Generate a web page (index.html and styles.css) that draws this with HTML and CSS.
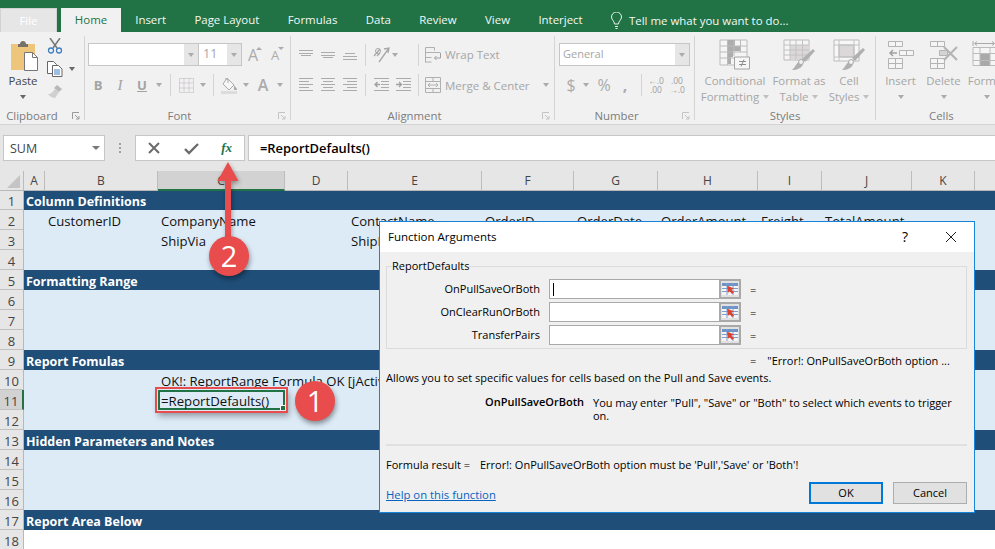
FILE: index.html
```html
<!DOCTYPE html>
<html lang="en">
<head>
<meta charset="utf-8">
<title>Function Arguments</title>
<link rel="stylesheet" href="styles.css">
</head>
<body>
<svg class="defs" width="0" height="0" aria-hidden="true">
  <symbol id="launch" viewBox="0 0 8 8"><path d="M.5 7V.5H7M3 3l4 4M7 4v3H4" fill="none" stroke="#9a9a9a"/></symbol>
  <symbol id="launchd" viewBox="0 0 8 8"><path d="M.5 7V.5H7M3 3l4 4M7 4v3H4" fill="none" stroke="#c4c4c4"/></symbol>
  <symbol id="altop" viewBox="0 0 16 16"><path d="M1 3.500h14M1 6.500h14M3 8.500h10" stroke="#ababab" fill="none"/></symbol>
  <symbol id="almid" viewBox="0 0 16 16"><path d="M1 5.500h14M1 8.500h14M3 10.500h10" stroke="#ababab" fill="none"/></symbol>
  <symbol id="albot" viewBox="0 0 16 16"><path d="M3 6.500h10M1 9.500h14M1 12.500h14" stroke="#ababab" fill="none"/></symbol>
  <symbol id="alleft" viewBox="0 0 16 16"><path d="M1 1.500h14M1 4.500h10M1 7.500h14M1 10.500h10M1 13.500h14" stroke="#ababab" fill="none"/></symbol>
  <symbol id="alcen" viewBox="0 0 16 16"><path d="M1 1.500h14M3 4.500h10M1 7.500h14M3 10.500h10M1 13.500h14" stroke="#ababab" fill="none"/></symbol>
  <symbol id="alright" viewBox="0 0 16 16"><path d="M1 1.500h14M5 4.500h10M1 7.500h14M5 10.500h10M1 13.500h14" stroke="#ababab" fill="none"/></symbol>
  <symbol id="indl" viewBox="0 0 17 16"><path d="M1 1.500h15M8 4.500h8M8 7.500h8M8 10.500h8M1 13.500h15" stroke="#ababab" fill="none"/><path d="M7 7.500H2M4.500 5L2 7.500 4.500 10" stroke="#a0a0a0" fill="none" stroke-width="1.300"/></symbol>
  <symbol id="indr" viewBox="0 0 17 16"><path d="M1 1.500h15M8 4.500h8M8 7.500h8M8 10.500h8M1 13.500h15" stroke="#ababab" fill="none"/><path d="M1 7.500h5M4 5l2.500 2.500L4 10" stroke="#a0a0a0" fill="none" stroke-width="1.300"/></symbol>
  <symbol id="merge" viewBox="0 0 16 16"><path d="M.5.5h15v15H.5zM.5 4.500h15M.5 11.500h15M8 .5v4M8 11.500v4M3 8h10M5 6l-2 2 2 2M11 6l2 2-2 2" fill="none" stroke="#b0b0b0"/></symbol>
  <symbol id="wrap" viewBox="0 0 16 16"><path d="M.5.5h9M.5 5.500h15M.5 10.500h6M.5 15h6M.5.5v15M9.500.5v3" fill="none" stroke="#b0b0b0"/><path d="M15.500 6v5h-6M11.500 9l-2 2 2 2" fill="none" stroke="#a0a0a0"/></symbol>
  <symbol id="orient" viewBox="0 0 18 18"><path d="M2 10l6-7M5 10l3-3M12 3l5-1-1 5M7 16L17 2" fill="none" stroke="#a8a8a8" stroke-width="1.300"/><circle cx="6" cy="5" r="2.500" fill="none" stroke="#a8a8a8"/></symbol>
  <symbol id="border" viewBox="0 0 15 15"><path d="M.5.5h14v14H.5zM5 .5v14M10 .5v14M.5 5h14M.5 10h14" fill="none" stroke="#b8b2bb" stroke-dasharray="1 1"/></symbol>
  <symbol id="fill" viewBox="0 0 17 17"><path d="M6 1l7 7-5 5-6-6z" fill="#f7f7f7" stroke="#aaa"/><path d="M4 2h3v4" stroke="#aaa" fill="none"/><path d="M13 8l3 4v1h-3z" fill="#ababab"/><rect y="14" width="16" height="3" fill="#dcdcdc"/></symbol>
  <symbol id="cf" viewBox="0 0 32 32"><path d="M1 1h27v25H1z" fill="#f5f5f5" stroke="#bbb"/><path d="M9 1h7v6H9zM9 7h12v5H9zM9 12h5v6H9zM9 18h3v7H9z" fill="#adadad"/><path d="M1 7h27M1 13h27M1 19h27M8.500 1v25M15 1v16M21.500 1v12" stroke="#bbb" fill="none"/><path d="M15.500 18h15v12h-15z" fill="#f7f7f7" stroke="#a5a5a5"/><path d="M20 22.500h7M20 25.500h7M25 20.500l-3 7" stroke="#8f8f8f" fill="none"/></symbol>
  <symbol id="ft" viewBox="0 0 32 32"><path d="M1 1h25v20H1z" fill="#f5f5f5" stroke="#bbb"/><path d="M7 6h19v15H7z" fill="#dcd8da"/><path d="M1 6h25M1 11h25M1 16h25M7 1v20M13 1v20M19.500 1v20" stroke="#c2c2c2" fill="none"/><path d="M30 10l2 2-10 11-3-3z" fill="#b0b0b0"/><path d="M17 22l3 3c-1 4-6 6-11 6 3-2 4-7 8-9z" fill="#b0b0b0"/><circle cx="18" cy="23" r="2.500" fill="#f1f1f1" stroke="#aaa"/></symbol>
  <symbol id="cs" viewBox="0 0 32 32"><path d="M1 1h25v21H1z" fill="#f7f7f7" stroke="#bbb"/><path d="M6 6h15v12H6z" fill="#dcd8da" stroke="#bbb"/><path d="M1 6h25M1 18h25M6 1v21M21 1v21" stroke="#c2c2c2" fill="none"/><path d="M30 9l2 2-10 11-3-3z" fill="#b0b0b0"/><path d="M17 22l3 3c-1 4-6 6-11 6 3-2 4-7 8-9z" fill="#b0b0b0"/><circle cx="18" cy="23" r="2.500" fill="#f1f1f1" stroke="#aaa"/></symbol>
  <symbol id="ins" viewBox="0 0 28 30"><path d="M1.500 1.500h14v5h-14zM8.500 1.500v5M1.500 18.500h14v10h-14zM1.500 23.500h14M8.500 18.500v10M12.500 10.500h14v5h-14zM19.500 10.500v5" fill="#f5f5f5" stroke="#b4b4b4"/><path d="M10 13H3M6 10l-3 3 3 3" fill="none" stroke="#a0a0a0" stroke-width="1.500"/></symbol>
  <symbol id="del" viewBox="0 0 30 30"><path d="M1.500 1.500h14v5h-14zM8.500 1.500v5M1.500 18.500h14v10h-14zM1.500 23.500h14M8.500 18.500v10" fill="#f5f5f5" stroke="#b4b4b4"/><path d="M10.500 10.500h8v5h-8z" fill="#d4d4d4" stroke="#b4b4b4"/><path d="M15 7l13 13M28 7L15 20" stroke="#b4b4b4" stroke-width="2.200" fill="none"/></symbol>
  <symbol id="fmt" viewBox="0 0 30 30"><path d="M1 1v5M24 1v5M3 3.500h19M5 1.500L2.500 3.500 5 5.500M20 1.500l2.500 2L20 5.500" fill="none" stroke="#aaa"/><path d="M1 7.500h24v18H1z" fill="#f5f5f5" stroke="#bbb"/><path d="M8 14h10v12H8z" fill="#a9a9a9"/><path d="M1 13.500h24M1 20.500h24M8 7.500v18M18 7.500v18" stroke="#bbb" fill="none"/></symbol>
  <symbol id="refb" viewBox="0 0 18 14"><path d="M1 1h16v12H1z" fill="#f4f4f4"/><path d="M1 1h16v3H1z" fill="#6d93c9"/><path d="M1 6.500h16M1 9.500h16M6 1v12M12 1v12" stroke="#7d9fcf" fill="none"/><path d="M6 3.500l7 3-2.500 1 2.500 3-2 1.500-2.500-3-1.500 2z" fill="#d9432f"/></symbol>
</svg>

<nav class="tabs">
  <span class="tab tab-file">File</span>
  <span class="tab tab-active">Home</span>
  <span class="tab">Insert</span>
  <span class="tab">Page Layout</span>
  <span class="tab">Formulas</span>
  <span class="tab">Data</span>
  <span class="tab">Review</span>
  <span class="tab">View</span>
  <span class="tab">Interject</span>
  <span class="tab tell">
    <svg width="11" height="17" viewBox="0 0 11 17"><path d="M3.500 12c0-3-3-4-3-7a5 5 0 0 1 10 0c0 3-3 4-3 7zM4 14.500h3M4.500 16.500h2" fill="none" stroke="#e8f1ec"/></svg>
    Tell me what you want to do...
  </span>
</nav>

<section class="ribbon">
  <div class="group g-clip">
    <div class="body clip-body">
      <div class="paste">
        <svg width="30" height="31" viewBox="0 0 30 31"><path d="M1 4h24v26H1z" fill="#edc67c"/><path d="M8 4h2c0-4 6-4 6 0h2v3H8z" fill="#77706a"/><path d="M14.500 12.500h8l5 5v13h-13z" fill="#fff" stroke="#777"/><path d="M22.500 12.500v5h5" fill="none" stroke="#777"/></svg>
        <span class="big-text">Paste</span>
        <i class="caret dark"></i>
      </div>
      <div class="clip-small">
        <div class="clip-item">
          <svg width="16" height="16" viewBox="0 0 16 16"><path d="M3 0l7 10M13 0L6 10" stroke="#777" stroke-width="1.500" fill="none"/><circle cx="4" cy="12.500" r="2.500" fill="none" stroke="#3f7fc1" stroke-width="1.300"/><circle cx="12" cy="12.500" r="2.500" fill="none" stroke="#3f7fc1" stroke-width="1.300"/></svg>
        </div>
        <div class="clip-item">
          <svg width="16" height="16" viewBox="0 0 16 16"><path d="M.5.5h6l3 3v9h-9z" fill="#fff" stroke="#666"/><path d="M5.500 4.500h6l3.500 3.500v7.500H5.500z" fill="#fff" stroke="#666"/><path d="M7 9h6M7 11h6M7 13h6" stroke="#3f7fc1"/></svg>
          <i class="caret dark"></i>
        </div>
        <div class="clip-item">
          <svg width="17" height="15" viewBox="0 0 17 15"><path d="M10 1l5 4-3 3-5-4z" fill="#b8b8b8"/><path d="M8 5l4 3-4 6c-2 0-6-2-7-4 3 0 5-2 7-5z" fill="#d0d0d0"/></svg>
        </div>
      </div>
    </div>
    <div class="glabel">Clipboard<svg class="launcher" width="8" height="8"><use href="#launch"/></svg></div>
  </div>

  <div class="group g-font">
    <div class="body">
      <div class="row">
        <div class="combo name"><span class="field"></span><span class="drop"><i class="caret"></i></span></div>
        <div class="combo size"><span class="field">11</span><span class="drop"><i class="caret"></i></span></div>
        <span class="tool w22 ga">A<i class="sup up"></i></span>
        <span class="tool w22 ga small">A<i class="sup"></i></span>
      </div>
      <div class="row r-font">
        <span class="tool w22 tb">B</span>
        <span class="tool w22 tb it">I</span>
        <span class="tool w22 tb un">U</span>
        <span class="tool w12"><i class="caret"></i></span>
        <i class="sep s5"></i>
        <span class="tool w22"><svg width="15" height="15"><use href="#border"/></svg></span>
        <span class="tool w12"><i class="caret"></i></span>
        <i class="sep s4"></i>
        <span class="tool w22"><svg width="17" height="17"><use href="#fill"/></svg></span>
        <span class="tool w12"><i class="caret"></i></span>
        <span class="tool w22 big-a">A</span>
        <span class="tool w12"><i class="caret"></i></span>
      </div>
    </div>
    <div class="glabel">Font<svg class="launcher" width="8" height="8"><use href="#launchd"/></svg></div>
  </div>

  <div class="group g-align">
    <div class="body">
      <div class="row">
        <span class="tool w22"><svg width="16" height="16"><use href="#altop"/></svg></span>
        <span class="tool w22"><svg width="16" height="16"><use href="#almid"/></svg></span>
        <span class="tool w22"><svg width="16" height="16"><use href="#albot"/></svg></span>
        <i class="sep s4"></i>
        <span class="tool w22"><svg width="18" height="18"><use href="#orient"/></svg></span>
        <span class="tool w22 start"><i class="caret"></i></span>
        <i class="sep s4"></i>
        <span class="texttool"><svg width="16" height="16"><use href="#wrap"/></svg>Wrap Text</span>
      </div>
      <div class="row">
        <span class="tool w22"><svg width="16" height="16"><use href="#alleft"/></svg></span>
        <span class="tool w22"><svg width="16" height="16"><use href="#alcen"/></svg></span>
        <span class="tool w22"><svg width="16" height="16"><use href="#alright"/></svg></span>
        <i class="sep s4"></i>
        <span class="tool w22"><svg width="17" height="16"><use href="#indl"/></svg></span>
        <span class="tool w22"><svg width="17" height="16"><use href="#indr"/></svg></span>
        <i class="sep s4"></i>
        <span class="texttool"><svg width="16" height="16"><use href="#merge"/></svg>Merge &amp; Center<i class="caret merge-caret"></i></span>
      </div>
    </div>
    <div class="glabel">Alignment<svg class="launcher" width="8" height="8"><use href="#launchd"/></svg></div>
  </div>

  <div class="group g-num">
    <div class="body">
      <div class="row">
        <div class="combo general"><span class="field">General</span><span class="drop"><i class="caret"></i></span></div>
      </div>
      <div class="row">
        <span class="tool w24 numsym">$</span>
        <span class="tool w6"><i class="caret"></i></span>
        <span class="tool w30 numsym">%</span>
        <span class="tool w12 numsym comma">,</span>
        <i class="sep s10"></i>
        <span class="tool w20 dec"><small>←.0</small><small>.00</small></span>
        <span class="tool w22 dec"><small>.00</small><small>→.0</small></span>
      </div>
    </div>
    <div class="glabel">Number<svg class="launcher" width="8" height="8"><use href="#launchd"/></svg></div>
  </div>

  <div class="group g-styles">
    <div class="body bigrow">
      <div class="bigbtn w72"><svg width="32" height="32"><use href="#cf"/></svg><span>Conditional</span><span>Formatting<i class="caret tiny"></i></span></div>
      <div class="bigbtn w56"><svg width="32" height="32"><use href="#ft"/></svg><span>Format as</span><span>Table<i class="caret tiny"></i></span></div>
      <div class="bigbtn w44"><svg width="32" height="32"><use href="#cs"/></svg><span>Cell</span><span>Styles<i class="caret tiny"></i></span></div>
    </div>
    <div class="glabel">Styles</div>
  </div>

  <div class="group g-cells">
    <div class="body bigrow">
      <div class="bigbtn w43"><svg width="28" height="30"><use href="#ins"/></svg><span>Insert</span><span><i class="caret"></i></span></div>
      <div class="bigbtn w43"><svg width="30" height="30"><use href="#del"/></svg><span>Delete</span><span><i class="caret"></i></span></div>
      <div class="bigbtn w44"><svg width="30" height="30"><use href="#fmt"/></svg><span>Format</span><span><i class="caret"></i></span></div>
    </div>
    <div class="glabel">Cells</div>
  </div>
</section>

<section class="formula">
  <div class="namebox"><span>SUM</span><i class="caret mid"></i></div>
  <div class="dots"><i></i><i></i><i></i></div>
  <div class="fxbox">
    <svg width="14" height="14" viewBox="0 0 14 14"><path d="M2 2l10 10M12 2L2 12" stroke="#6b6b6b" stroke-width="2" fill="none"/></svg>
    <svg width="15" height="13" viewBox="0 0 15 13"><path d="M1 7l4 4 9-9" stroke="#6b6b6b" stroke-width="2.400" fill="none"/></svg>
    <span class="fx">fx</span>
  </div>
  <div class="finput">=ReportDefaults()</div>
</section>

<main class="sheet">
  <div class="row-g head">
    <span class="corner"><svg width="13" height="13" viewBox="0 0 13 13"><path d="M13 0v13H0z" fill="#c4c4c4"/></svg></span>
    <span>A</span><span>B</span><span class="sel-col">C</span><span>D</span><span>E</span><span>F</span><span>G</span><span>H</span><span>I</span><span>J</span><span>K</span><span></span>
  </div>
  <div class="row-g band"><b>1</b><span class="b-title">Column Definitions</span></div>
  <div class="row-g data"><b>2</b><span></span><span>CustomerID</span><span>CompanyName</span><span></span><span>ContactName</span><span>OrderID</span><span>OrderDate</span><span>OrderAmount</span><span>Freight</span><span>TotalAmount</span><span></span><span></span></div>
  <div class="row-g data"><b>3</b><span></span><span></span><span>ShipVia</span><span></span><span>ShipName</span></div>
  <div class="row-g data"><b>4</b></div>
  <div class="row-g band"><b>5</b><span class="b-title">Formatting Range</span></div>
  <div class="row-g data"><b>6</b></div>
  <div class="row-g data"><b>7</b></div>
  <div class="row-g data"><b>8</b></div>
  <div class="row-g band"><b>9</b><span class="b-title">Report Fomulas</span></div>
  <div class="row-g data"><b>10</b><span></span><span></span><span>OK!: ReportRange Formula OK [jActive]</span></div>
  <div class="row-g data"><b class="sel-row">11</b><span></span><span></span><span class="sel-cell">=ReportDefaults()</span></div>
  <div class="row-g data"><b>12</b></div>
  <div class="row-g band"><b>13</b><span class="b-title">Hidden Parameters and Notes</span></div>
  <div class="row-g data"><b>14</b></div>
  <div class="row-g data"><b>15</b></div>
  <div class="row-g data"><b>16</b></div>
  <div class="row-g band"><b>17</b><span class="b-title">Report Area Below</span></div>
  <div class="row-g blank"><b>18</b></div>
</main>

<svg class="arrow" width="40" height="96" viewBox="0 0 40 96" aria-hidden="true">
  <path d="M17 20h6v74h-6z" fill="#e84c4c"/>
  <path d="M20 1l10.500 19h-21z" fill="#e84c4c"/>
</svg>
<div class="badge badge-2">2</div>
<div class="badge badge-1">1</div>

<aside class="dialog">
  <header class="dtitle">
    <span>Function Arguments</span>
    <span class="help">?</span>
    <svg width="12" height="12" viewBox="0 0 12 12"><path d="M1 1l10 10M11 1L1 11" stroke="#222" fill="none"/></svg>
  </header>
  <div class="dbody">
    <fieldset class="args">
      <legend>ReportDefaults</legend>
      <div class="arg"><label>OnPullSaveOrBoth</label><div class="ainput"><span class="field caretbar"></span><span class="refbtn"><svg width="18" height="14"><use href="#refb"/></svg></span></div><span>=</span></div>
      <div class="arg"><label>OnClearRunOrBoth</label><div class="ainput"><span class="field"></span><span class="refbtn"><svg width="18" height="14"><use href="#refb"/></svg></span></div><span>=</span></div>
      <div class="arg"><label>TransferPairs</label><div class="ainput"><span class="field"></span><span class="refbtn"><svg width="18" height="14"><use href="#refb"/></svg></span></div><span>=</span></div>
    </fieldset>
    <div class="preview"><span>=</span><span>"Error!: OnPullSaveOrBoth option ...</span></div>
    <p class="desc">Allows you to set specific values for cells based on the Pull and Save events.</p>
    <div class="argdesc"><strong>OnPullSaveOrBoth</strong><p>You may enter "Pull", "Save" or "Both" to select which events to trigger on.</p></div>
    <hr class="rule">
    <div class="result"><span>Formula result =</span><span>Error!: OnPullSaveOrBoth option must be 'Pull','Save' or 'Both'!</span></div>
    <footer class="dfoot">
      <a class="link" href="#">Help on this function</a>
      <span class="btn btn-ok">OK</span>
      <span class="btn">Cancel</span>
    </footer>
  </div>
</aside>
</body>
</html>
```
FILE: styles.css
```css
* { box-sizing: border-box; }
html, body { margin: 0; height: 100%; }
body {
  width: 995px; height: 549px; overflow: hidden; position: relative;
  font-family: "Open Sans", "Noto Sans", sans-serif; font-size: 11.4px; color: #000;
  background: #fff;
}
.defs { position: absolute; }
svg { display: block; flex: none; }

/* tabs */
.tabs { height: 32px; background: #217346; display: flex; align-items: flex-end; color: #f4f8f6; font-size: 11.45px; }
.tab { height: 24px; line-height: 23px; padding: 0 14.2px; white-space: nowrap; }
.tab-file { width: 57px; padding: 0; text-align: center; background: #e6e6e6; color: #fff; border: 1px solid #d2d2d2; border-bottom: 0; margin-right: 4px; }
.tab-active { width: 60px; padding: 0; text-align: center; background: #f1f1f1; color: #217346; }
.tell { display: flex; align-items: center; gap: 7px; }

/* ribbon */
.ribbon { height: 93px; background: #f1f1f1; border-bottom: 1px solid #d4d4d4; padding-top: 4px; display: flex; overflow: hidden; }
.group { height: 84px; border-right: 1px solid #d4d4d4; display: flex; flex-direction: column; flex: none; }
.g-clip { width: 85px; }
.g-font { width: 206px; }
.g-align { width: 264px; }
.g-num { width: 140px; }
.g-styles { width: 181px; }
.g-cells { width: 120px; border-right: 0; }
.body { flex: 1; padding-top: 7px; display: flex; flex-direction: column; gap: 8px; min-height: 0; }
.glabel { position: relative; height: 16px; line-height: 16px; margin-bottom: -4px; padding-right: 16px; text-align: center; color: #7c7c7c; font-size: 11.4px; }
.g-clip .glabel { padding-right: 20px; }
.g-styles .glabel { padding-right: 0; }
.launcher { position: absolute; right: 4px; top: 4px; }
.g-cells .glabel { text-align: left; padding-left: 53px; }
.row { display: flex; align-items: center; height: 23px; }
.row + .row { height: 22px; }
.tool { display: flex; align-items: center; justify-content: center; height: 22px; flex: none; color: #ababab; }
.start { justify-content: flex-start; }
.w6 { width: 6px; } .w12 { width: 12px; } .w20 { width: 20px; } .w22 { width: 22px; } .w24 { width: 24px; } .w30 { width: 30px; }
.caret { display: inline-block; width: 0; height: 0; border: 3.5px solid transparent; border-top: 4px solid #ababab; border-bottom: 0; flex: none; }
.caret.dark { border-top-color: #666; }
.caret.tiny { margin-left: 4px; vertical-align: middle; border-top-color: #c0c0c0; }
.sep { display: block; width: 1px; height: 22px; background: #d4d4d4; flex: none; }
.s4 { margin: 0 4px; } .s5 { margin: 0 4px 0 5px; } .s10 { margin: 0 4px 0 10px; }

/* clipboard */
.clip-body { flex-direction: row; padding: 4px 0 0 4px; gap: 0; }
.paste { width: 38px; display: flex; flex-direction: column; align-items: center; }
.paste svg { margin-left: 3px; }
.big-text { line-height: 16px; margin-top: 2px; color: #444; }
.paste .caret { margin-top: 6px; }
.clip-small { margin-top: -6px; }
.clip-item { height: 23px; display: flex; align-items: center; gap: 6px; padding-left: 5px; }

/* font */
.g-font .row:first-child { padding-left: 3px; }
.combo { display: flex; height: 23px; border: 1px solid #c6c6c6; flex: none; }
.combo .field { flex: 1; background: #fff; color: #a6a6a6; padding-left: 3px; line-height: 20px; }
.combo .drop { width: 14px; background: #e6e6e6; display: flex; align-items: center; justify-content: center; }
.combo.name { width: 111px; }
.combo.size { width: 43px; border-left: 0; }
.combo.size .field { padding-left: 4px; font-size: 12.5px; }
.ga { font-size: 16px; align-items: center; position: relative; }
.ga.small { font-size: 13px; }
.sup { position: absolute; right: 2px; top: 3px; border: 3px solid transparent; border-bottom: 3px solid #ababab; border-top: 0; width: 0; height: 0; }
.sup:not(.up) { border-bottom: 0; border-top: 3px solid #ababab; }
.r-font { padding-left: 2px; }
.tb { font: bold 13px "Open Sans", sans-serif; color: #a3a3a3; }
.it { font-family: "Liberation Serif", serif; font-style: italic; font-weight: 400; font-size: 15px; }
.un { text-decoration: underline; }
.big-a { font-size: 16px; font-weight: 600; }

/* alignment */
.g-align .row { padding-left: 4px; }
.texttool { display: flex; align-items: center; gap: 4px; padding-left: 2px; color: #a6a6a6; font-size: 11.5px; white-space: nowrap; }
.merge-caret { margin-left: 9px; }

/* number */
.g-num .row { padding-left: 4px; }
.combo.general { width: 131px; }
.combo.general .field { font-size: 11px; }
.numsym { font-size: 16px; }
.comma { font-weight: 700; align-items: flex-start; }
.dec { flex-direction: column; }
.dec small { font-size: 8.5px; line-height: 9px; color: #a0a0a0; }

/* styles, cells */
.bigrow { flex-direction: row; gap: 0; padding-top: 3px; }
.g-styles .bigrow { padding-left: 4px; }
.g-cells .bigrow { padding-left: 3px; }
.bigbtn { display: flex; flex-direction: column; align-items: center; color: #a6a6a6; flex: none; white-space: nowrap; }
.bigbtn svg { margin-bottom: 2px; height: 32px; }
.bigbtn span { line-height: 16px; height: 16px; display: flex; align-items: center; }
.w72 { width: 72px; } .w56 { width: 56px; } .w44 { width: 44px; } .w43 { width: 43px; }

/* formula bar */
.formula { height: 46px; background: #e6e6e6; padding: 10px 0 10px 3px; display: flex; }
.namebox { width: 102px; background: #fff; border: 1px solid #c6c6c6; display: flex; align-items: center; justify-content: space-between; padding: 0 4px 0 6px; color: #444; font-size: 12.5px; }
.caret.mid { border-top-color: #777; border-width: 4px 4px 0; }
.dots { width: 30px; display: flex; flex-direction: column; align-items: center; justify-content: center; gap: 2px; }
.dots i { display: block; width: 2px; height: 2px; background: #a0a0a0; }
.fxbox { width: 110px; margin-right: 3px; background: #fff; border: 1px solid #c6c6c6; display: flex; align-items: center; justify-content: space-between; padding: 0 12px 0 11px; }
.fx { font: italic 700 13px "Liberation Serif", serif; color: #217346; }
.finput { flex: 1; background: #fff; border: 1px solid #c6c6c6; border-right: 0; padding-left: 11px; line-height: 24px; font-weight: 600; font-size: 12.9px; }

/* sheet */
.row-g { display: grid; grid-template-columns: 24px 21px 113px 127px 63px 134px 92px 84px 100px 64px 90px 63px 1fr; height: 20px; white-space: nowrap; line-height: 23px; font-size: 13.1px; }
.row-g > b { height: 20px; font-weight: 400; background: #e6e6e6; color: #444; text-align: center; border-right: 1px solid #b8b8b8; border-bottom: 1px solid #c0c0c0; font-size: 13px; }
.head { height: 20px; background: #e6e6e6; color: #444; text-align: center; font-size: 12px; line-height: 20px; border-bottom: 1px solid #b8b8b8; }
.head span { border-right: 1px solid #bcbcbc; height: 19px; }
.head span:last-child { border-right: 0; }
.corner { display: flex; align-items: flex-end; justify-content: flex-end; padding: 0 3px 2px 0; }
.sel-col { background: #d2d2d2; border-bottom: 2px solid #217346; height: 20px !important; }
.head + .band { height: 19px; line-height: 21px; }
.head + .band > b { height: 19px; }
.band { background: #1f4e78; color: #fff; }
.band .b-title { grid-column: 2 / -1; font-weight: 700; padding-left: 2px; font-size: 12.5px; }
.data { background: #ddebf7; color: #111; }
.data span { padding-left: 3px; }
.blank { background: #fff; }
.sel-row { background: #d2d2d2 !important; border-right: 2px solid #217346 !important; }
.sel-cell { position: relative; z-index: 1; height: 20px; line-height: 22px; font-size: 13.2px; box-shadow: inset 0 0 0 2px #217346, 0 0 0 1px #ddebf7, 0 0 0 3px #e84c4c, 2px 4px 6px 2px rgba(0,0,0,.35); }
.sel-cell::after { content: ""; position: absolute; right: 0; bottom: 0; width: 4px; height: 4px; background: #217346; border-left: 1px solid #fff; border-top: 1px solid #fff; }

/* annotations */
.arrow { position: absolute; left: 208px; top: 161px; z-index: 2; filter: drop-shadow(1px 2px 2px rgba(0,0,0,.35)); }
.badge { position: absolute; width: 40px; height: 40px; border-radius: 50%; background: #e84c4c; color: #fff; text-align: center; font: 400 29px/40px "Open Sans", sans-serif; z-index: 2; box-shadow: 1px 3px 5px rgba(0,0,0,.4); }
.badge-2 { left: 209px; top: 236px; }
.badge-1 { left: 295px; top: 381px; }

/* dialog */
.dialog { position: absolute; left: 379px; top: 221px; width: 596px; height: 292px; border: 1px solid #1883d7; background: #f0f0f0; z-index: 1; font-size: 11px; }
.dtitle { height: 30px; background: #fff; display: flex; align-items: center; padding: 0 17px 1px 8px; font-size: 11.5px; }
.dtitle > span:first-child { flex: 1; }
.help { margin-right: 37px; font-size: 14px; }
.dbody { padding: 0 7px 0 6px; }
.args { margin: 6px 0 0; padding: 5px 0 3px; border: 1px solid #dcdcdc; min-width: 0; width: 581px; }
.args legend { padding: 0; margin-left: 5px; line-height: 16px; }
.arg { display: grid; grid-template-columns: 153px 192px auto; column-gap: 9px; align-items: center; height: 20px; }
.arg + .arg { margin-top: 3px; }
.arg label { text-align: right; padding-bottom: 2px; }
.ainput { display: flex; height: 20px; border: 1px solid #a9a9a9; background: #fff; }
.ainput .field { flex: 1; }
.caretbar { position: relative; }
.caretbar::after { content: ""; position: absolute; left: 3px; top: 3px; width: 1px; height: 13px; background: #000; }
.refbtn { width: 22px; margin: -1px; background: #e1e1e1; border: 2px solid #a9a9a9; display: flex; align-items: center; justify-content: center; }
.refbtn svg { margin: 0 -1px; }
.preview { height: 16px; margin-top: 4px; line-height: 16px; padding-left: 364px; display: flex; gap: 11px; }
.desc { margin: 1px 0 0; line-height: 16px; }
.argdesc { display: grid; grid-template-columns: 198px 360px; column-gap: 9px; margin-top: 8px; }
.argdesc strong { text-align: right; font-weight: 600; line-height: 16px; }
.argdesc p { margin: 0; line-height: 13px; padding-top: 2px; }
.rule { margin: 22px 0 0; border: 0; height: 2px; background: #e0e0e0; }
.result { margin-top: 11px; line-height: 16px; display: flex; gap: 0; }
.result span:first-child { width: 94px; flex: none; }
.dfoot { display: flex; align-items: center; margin-top: 9px; }
.link { flex: 1; color: #0563c1; text-decoration: underline; padding-top: 3px; font-size: 11.3px; }
.btn { width: 74px; height: 22px; line-height: 20px; background: #e1e1e1; border: 1px solid #adadad; text-align: center; }
.btn-ok { border: 2px solid #0078d7; line-height: 18px; margin-right: 10px; }
```
